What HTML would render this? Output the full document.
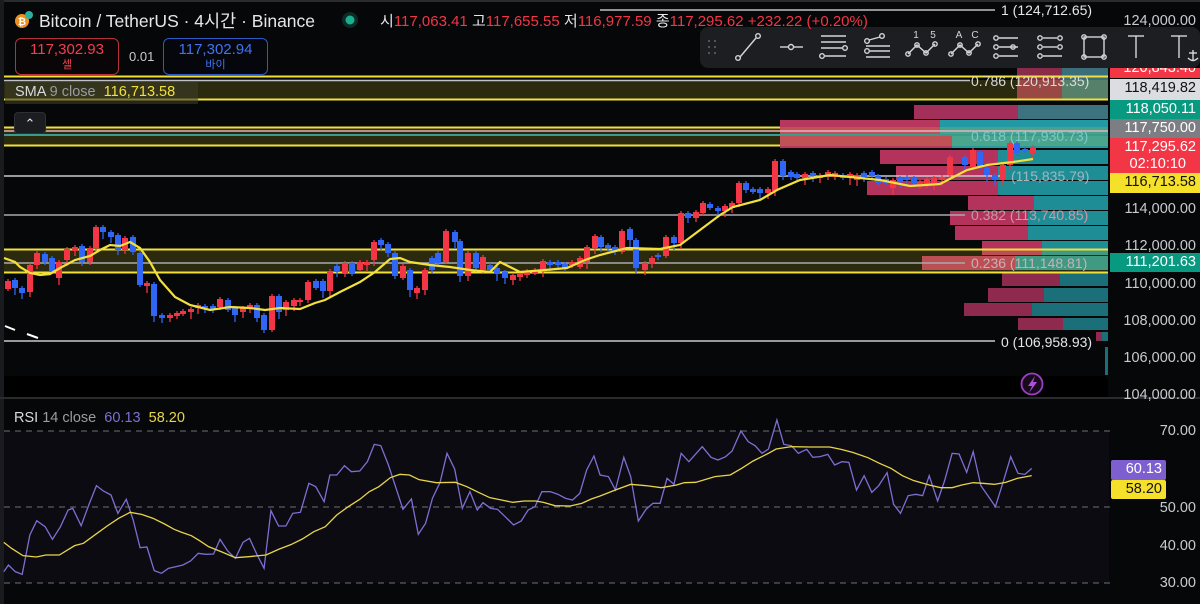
<!DOCTYPE html>
<html><head><meta charset="utf-8">
<style>
*{margin:0;padding:0;box-sizing:border-box}
body{width:1200px;height:604px;background:#060709;overflow:hidden;position:relative;font-family:"Liberation Sans","Noto Sans CJK KR",sans-serif;color:#d1d4dc}
.a{position:absolute;white-space:nowrap}
.ax{position:absolute;right:4px;font-size:14.5px;color:#c9cbd0;text-align:right;line-height:18px}
.bx{position:absolute;left:1110px;width:90px;font-size:14.5px;text-align:right;padding-right:4px;line-height:19px}
.fib{position:absolute;font-size:14px;color:#b8bac0;line-height:16px}
</style></head><body>
<svg width="1200" height="604" style="position:absolute;left:0;top:0">
<rect x="0" y="0" width="1200" height="604" fill="#060709"/>
<rect x="0" y="376" width="1108" height="22" fill="#000"/>
<rect x="0" y="0" width="1200" height="2" fill="#2a2b2f"/>
<rect x="0" y="0" width="4" height="604" fill="#1a1b1e"/>
<g>
<rect x="1017" y="68" width="45" height="32" fill="#8a2b4a"/><rect x="1062" y="68" width="46" height="32" fill="#3a6e78"/>
<rect x="914" y="105" width="104" height="14" fill="#a3305a"/><rect x="1018" y="105" width="90" height="14" fill="#3d737e"/>
<rect x="780" y="120" width="160" height="14" fill="#b8375f"/><rect x="940" y="120" width="168" height="14" fill="#239aa3"/>
<rect x="780" y="136" width="172" height="12" fill="#b8375f"/><rect x="952" y="136" width="156" height="12" fill="#2a9aa0"/>
<rect x="880" y="150" width="118" height="14" fill="#b3335c"/><rect x="998" y="150" width="110" height="14" fill="#1f8d95"/>
<rect x="896" y="166" width="102" height="14" fill="#b3335c"/><rect x="998" y="166" width="110" height="14" fill="#1f8d95"/>
<rect x="867" y="181" width="131" height="14" fill="#b3335c"/><rect x="998" y="181" width="110" height="14" fill="#1f8d95"/>
<rect x="968" y="196" width="66" height="14" fill="#b3335c"/><rect x="1034" y="196" width="74" height="14" fill="#1f8d95"/>
<rect x="950" y="211" width="78" height="14" fill="#b3335c"/><rect x="1028" y="211" width="80" height="14" fill="#1f8d95"/>
<rect x="955" y="226" width="73" height="14" fill="#b3335c"/><rect x="1028" y="226" width="80" height="14" fill="#1f8d95"/>
<rect x="982" y="241" width="60" height="14" fill="#b3335c"/><rect x="1042" y="241" width="66" height="14" fill="#1f8d95"/>
<rect x="922" y="256" width="93" height="14" fill="#b3335c"/><rect x="1015" y="256" width="93" height="14" fill="#1f8d95"/>
<rect x="1002" y="272" width="58" height="14" fill="#8e2a4d"/><rect x="1060" y="272" width="48" height="14" fill="#1b6f78"/>
<rect x="988" y="288" width="56" height="14" fill="#8e2a4d"/><rect x="1044" y="288" width="64" height="14" fill="#1b6f78"/>
<rect x="964" y="303" width="68" height="13" fill="#8e2a4d"/><rect x="1032" y="303" width="76" height="13" fill="#1b6f78"/>
<rect x="1018" y="318" width="45" height="12" fill="#8e2a4d"/><rect x="1063" y="318" width="45" height="12" fill="#1b6f78"/>
<rect x="1096" y="332" width="6" height="9" fill="#8e2a4d"/><rect x="1102" y="332" width="6" height="9" fill="#1b6f78"/>
<rect x="1105" y="347" width="3" height="28" fill="#1b6f78"/>
</g>
<rect x="4" y="80" width="1104" height="20" fill="rgba(230,220,40,0.17)"/>
<rect x="4" y="127" width="1104" height="19" fill="rgba(230,220,40,0.17)"/>
<rect x="4" y="249" width="1104" height="23" fill="rgba(230,220,40,0.17)"/>
<g stroke-width="2" fill="none">
<line x1="4" y1="76.5" x2="1108" y2="76.5" stroke="#f0e03a"/>
<line x1="4" y1="99.5" x2="1108" y2="99.5" stroke="#f0e03a"/>
<line x1="4" y1="127.5" x2="780" y2="127.5" stroke="#f0e03a"/>
<line x1="4" y1="145.5" x2="780" y2="145.5" stroke="#f0e03a"/>
<line x1="4" y1="249.5" x2="1108" y2="249.5" stroke="#f0e03a"/>
<line x1="4" y1="272.5" x2="1108" y2="272.5" stroke="#f0e03a"/>
</g>
<g stroke-width="1.5">
<line x1="600" y1="10" x2="995" y2="10" stroke="#bfc1c6"/>
<line x1="4" y1="80.5" x2="970" y2="80.5" stroke="#bfc1c6"/>
<line x1="4" y1="131" x2="1108" y2="131" stroke="#e8b0c0"/>
<line x1="4" y1="135" x2="1108" y2="135" stroke="#40c0b8"/>
<line x1="4" y1="176" x2="1000" y2="176" stroke="#c8cacf"/>
<line x1="4" y1="215" x2="965" y2="215" stroke="#a8aab0"/>
<line x1="4" y1="263" x2="965" y2="263" stroke="#a8aab0"/>
<line x1="4" y1="341" x2="995" y2="341" stroke="#c8cacf"/>
</g>
<line x1="5" y1="326" x2="15" y2="330" stroke="#fff" stroke-width="2"/>
<line x1="27" y1="334" x2="38" y2="338" stroke="#fff" stroke-width="2"/>
<g id="candles"></g>
<polyline fill="none" stroke="#f2e03c" stroke-width="2.2" points="4,258 15,262 20,267 30,273 40,275 50,274 60,268 75,260 90,256 100,250 110,245 120,246 130,242 140,248 150,262 160,280 175,297 190,305 210,310 230,307 250,308 265,310 280,308 300,309 315,303 325,300 340,292 360,282 375,272 390,259 400,258 410,262 430,265 450,267 470,270 490,272 500,262 520,272 545,270 567,268 585,260 600,255 627,248 660,249 680,245 700,230 720,215 733,207 760,200 777,190 800,180 830,175 860,178 880,180 910,186 940,184 967,170 987,165 1013,162 1033,159"/>
<rect x="0" y="397" width="1200" height="2" fill="#2a2b2f"/>
<rect x="4" y="431" width="1105" height="152" fill="#0c0b12"/>
<g stroke="#6e6f76" stroke-width="1" stroke-dasharray="6,5">
<line x1="4" y1="431" x2="1110" y2="431"/><line x1="4" y1="507" x2="1110" y2="507"/><line x1="4" y1="583" x2="1110" y2="583"/>
</g>
<g transform="translate(0,395) scale(0.38270,0.33333)" fill="none">
<polyline vector-effect="non-scaling-stroke" stroke="#7d6fd2" stroke-width="1.3" points="10,530 22,510 40,530 58,538 78,420 96,377 118,395 137,433 158,395 178,345 190,340 212,392 232,330 252,272 270,288 290,300 308,355 330,313 348,375 366,458 384,456 403,527 422,535 440,520 460,515 478,510 498,498 518,475 538,478 558,477 575,433 595,468 615,490 635,442 652,430 672,480 690,520 708,347 728,393 747,393 765,355 785,352 807,265 825,275 847,320 862,240 880,240 900,212 918,230 940,228 960,200 978,148 995,152 1015,210 1035,280 1053,343 1075,312 1093,418 1112,385 1130,310 1150,262 1168,175 1188,222 1208,340 1228,290 1247,345 1262,323 1282,340 1300,343 1320,365 1342,390 1362,378 1380,345 1398,335 1416,290 1438,290 1458,298 1478,310 1496,315 1515,295 1533,225 1552,183 1568,240 1590,245 1608,285 1630,187 1648,245 1668,378 1688,343 1706,325 1725,325 1743,250 1761,268 1780,175 1800,200 1835,155 1858,187 1876,195 1896,185 1913,168 1936,108 1955,140 1973,152 1991,175 2008,162 2030,75 2048,148 2068,152 2086,175 2108,163 2124,187 2143,185 2163,178 2181,210 2200,200 2218,202 2238,285 2258,242 2278,292 2296,272 2318,233 2335,328 2353,355 2373,302 2393,298 2411,302 2428,242 2450,318 2468,258 2488,175 2506,177 2526,232 2543,170 2563,272 2583,305 2601,335 2621,262 2641,185 2660,235 2678,238 2696,220"/>
<polyline vector-effect="non-scaling-stroke" stroke="#e8d44a" stroke-width="1.3" points="10,442 30,460 60,482 95,486 120,480 155,480 195,452 218,445 250,418 280,393 310,370 340,352 370,358 400,370 430,387 455,403 475,412 500,422 520,436 545,455 580,471 615,488 650,485 695,480 730,462 760,449 790,432 820,410 850,395 880,360 910,335 940,313 965,290 990,275 1020,248 1045,238 1070,240 1095,254 1140,263 1190,262 1220,275 1250,292 1280,308 1310,315 1340,322 1370,318 1400,318 1420,322 1450,332 1490,333 1520,325 1545,312 1568,303 1608,285 1648,268 1688,272 1728,278 1768,270 1788,263 1818,262 1868,245 1908,240 1938,220 1968,198 2008,175 2028,162 2068,155 2118,156 2168,156 2198,163 2228,172 2268,188 2298,205 2328,220 2358,242 2388,257 2428,270 2458,278 2488,278 2513,270 2543,263 2568,265 2598,268 2628,262 2658,250 2696,242"/>
</g>
<circle cx="1032" cy="384" r="10.5" fill="#160a1c" stroke="#9b3fc4" stroke-width="1.8"/>
<path d="M1035 376 L1028 386 L1032 386 L1029 393 L1037 382 L1033 382 Z" fill="#b04fd8"/>
<circle cx="22" cy="21" r="7" fill="#f0901a"/>
<text x="22" y="25" font-size="10" font-weight="bold" fill="#fff" text-anchor="middle" font-family="Liberation Sans">₿</text>
<circle cx="29" cy="15" r="4" fill="#2ab0a0"/>
<circle cx="350" cy="20" r="8" fill="#0d2a26"/><circle cx="350" cy="20" r="4.5" fill="#18b08e"/>
</svg>

<div class="a" style="left:700px;top:27px;width:500px;height:41px;background:#1d1e21;border-radius:8px"></div>
<svg width="500" height="41" style="position:absolute;left:700px;top:27px" fill="none" stroke="#d4d6da" stroke-width="1.4">
<g fill="#666" stroke="none"><circle cx="9" cy="14" r="1"/><circle cx="15" cy="14" r="1"/><circle cx="9" cy="20" r="1"/><circle cx="15" cy="20" r="1"/><circle cx="9" cy="26" r="1"/><circle cx="15" cy="26" r="1"/></g>
<line x1="40" y1="30" x2="56" y2="11"/><circle cx="38" cy="31" r="2.3"/><circle cx="58" cy="9" r="2.3"/>
<line x1="80" y1="20" x2="88" y2="20"/><circle cx="91" cy="20" r="2.5"/><line x1="94" y1="20" x2="103" y2="20"/>
<line x1="121" y1="9" x2="146" y2="9"/><line x1="121" y1="15" x2="146" y2="15"/><line x1="121" y1="21" x2="142" y2="21"/><circle cx="145" cy="21" r="2.3"/><line x1="125" y1="29" x2="146" y2="29"/><circle cx="122" cy="29" r="2.3"/>
<circle cx="167" cy="14" r="2.3"/><circle cx="182" cy="9" r="2.3"/><line x1="169" y1="13" x2="180" y2="10"/><circle cx="167" cy="24" r="2.3"/><line x1="166" y1="19" x2="190" y2="19"/><line x1="170" y1="24" x2="190" y2="24"/><line x1="166" y1="30" x2="190" y2="30"/>
<polyline points="208,27 217,18 226,26 235,17"/><circle cx="208" cy="27" r="2.2"/><circle cx="217" cy="18" r="2.2"/><circle cx="226" cy="26" r="2.2"/><circle cx="235" cy="17" r="2.2"/>
<polyline points="251,27 260,18 269,26 278,17"/><circle cx="251" cy="27" r="2.2"/><circle cx="260" cy="18" r="2.2"/><circle cx="269" cy="26" r="2.2"/><circle cx="278" cy="17" r="2.2"/>
<g fill="#d4d6da" stroke="none" font-size="10" font-family="Liberation Sans" text-anchor="middle"><text x="216" y="11">1</text><text x="233" y="11">5</text><text x="259" y="11">A</text><text x="275" y="11">C</text></g>
<circle cx="296" cy="11" r="2.2"/><line x1="299" y1="11" x2="318" y2="11"/><circle cx="296" cy="20" r="2.2"/><line x1="299" y1="20" x2="318" y2="20"/><circle cx="296" cy="29" r="2.2"/><line x1="299" y1="29" x2="318" y2="29"/>
<circle cx="313" cy="20" r="2.2"/><circle cx="340" cy="11" r="2.2"/><line x1="343" y1="11" x2="357" y2="11"/><circle cx="360" cy="11" r="2.2"/><circle cx="340" cy="20" r="2.2"/><line x1="343" y1="20" x2="357" y2="20"/><circle cx="360" cy="20" r="2.2"/><circle cx="340" cy="29" r="2.2"/><line x1="343" y1="29" x2="362" y2="29"/>
<rect x="384" y="10" width="20" height="20"/><circle cx="384" cy="10" r="2.2"/><circle cx="404" cy="10" r="2.2"/><circle cx="384" cy="30" r="2.2"/><circle cx="404" cy="30" r="2.2"/>
<line x1="428" y1="9" x2="444" y2="9"/><line x1="436" y1="9" x2="436" y2="31"/>
<line x1="471" y1="9" x2="487" y2="9"/><line x1="479" y1="9" x2="479" y2="31"/><line x1="493" y1="23" x2="493" y2="34"/><line x1="489" y1="26" x2="497" y2="26"/><path d="M488 31 Q493 36 498 31"/>
</svg>

<div class="a" style="left:39px;top:8px;font-size:17.5px;color:#e4e6ea">Bitcoin / TetherUS · 4시간 · Binance</div>
<div class="a" style="left:380px;top:10px;font-size:15px;color:#e4e6ea">시<span style="color:#f23645">117,063.41</span> 고<span style="color:#f23645">117,655.55</span> 저<span style="color:#f23645">116,977.59</span> 종<span style="color:#f23645">117,295.62 +232.22 (+0.20%)</span></div>
<div class="a" style="left:15px;top:38px;width:104px;height:37px;border:1.5px solid #b8303c;border-radius:6px;text-align:center;color:#f0404e;background:#0a0608">
<div style="font-size:15px;line-height:19px;margin-top:1px">117,302.93</div><div style="font-size:11px;line-height:13px">셀</div></div>
<div class="a" style="left:129px;top:49px;font-size:13px;color:#c8cacf">0.01</div>
<div class="a" style="left:163px;top:38px;width:105px;height:37px;border:1.5px solid #2d58c8;border-radius:6px;text-align:center;color:#3f74f0;background:#05070d">
<div style="font-size:15px;line-height:19px;margin-top:1px">117,302.94</div><div style="font-size:11px;line-height:13px">바이</div></div>
<div class="a" style="left:5px;top:82px;width:193px;height:22px;background:rgba(60,60,40,0.6)"></div>
<div class="a" style="left:15px;top:84px;font-size:14.5px;color:#d8dade">SMA <span style="color:#9a9ca2">9 close</span>&nbsp; <span style="color:#f2e03c">116,713.58</span></div>
<div class="a" style="left:14px;top:112px;width:32px;height:22px;background:#1c1d20;border:1px solid #2e2f33;border-radius:4px;color:#e4e6ea;font-size:13px;text-align:center;line-height:22px">⌃</div>

<div class="fib" style="left:1001px;top:2px;color:#e4e6ea">1 (124,712.65)</div>
<div class="fib" style="left:971px;top:73px;color:#d8dade">0.786 (120,913.35)</div>
<div class="fib" style="left:971px;top:128px;color:#7ec8c8">0.618 (117,930.73)</div>
<div class="fib" style="left:1011px;top:168px;color:#9fb8c0">(115,835.79)</div>
<div class="fib" style="left:971px;top:207px;color:#c89aaa">0.382 (113,740.85)</div>
<div class="fib" style="left:971px;top:255px;color:#c8b0b8">0.236 (111,148.81)</div>
<div class="fib" style="left:1001px;top:334px;color:#e4e6ea">0 (106,958.93)</div>

<div class="ax" style="top:12px">124,000.00</div>
<div class="bx" style="top:68px;height:10px;background:#f23645;color:#fff;line-height:14px;overflow:hidden"><span style="position:relative;top:-7px">120,843.40</span></div>
<div class="bx" style="top:79px;height:21px;background:#dcdde0;color:#111">118,419.82</div>
<div class="bx" style="top:100px;height:19px;background:#089981;color:#fff">118,050.11</div>
<div class="bx" style="top:119px;height:19px;background:#7d7e84;color:#fff">117,750.00</div>
<div class="bx" style="top:138px;height:35px;background:#f23645;color:#fff;line-height:17px;padding-top:1px">117,295.62<br><span style="padding-right:10px">02:10:10</span></div>
<div class="bx" style="top:173px;height:20px;background:#f5e02a;color:#111">116,713.58</div>
<div class="ax" style="top:200px">114,000.00</div>
<div class="ax" style="top:237px">112,000.00</div>
<div class="bx" style="top:253px;height:19px;background:#089981;color:#fff">111,201.63</div>
<div class="ax" style="top:275px">110,000.00</div>
<div class="ax" style="top:312px">108,000.00</div>
<div class="ax" style="top:349px">106,000.00</div>
<div class="ax" style="top:386px">104,000.00</div>

<div class="a" style="left:14px;top:410px;font-size:14.5px;color:#d8dade">RSI <span style="color:#9a9ca2">14 close</span>&nbsp; <span style="color:#7d6fd2">60.13</span>&nbsp; <span style="color:#e8d44a">58.20</span></div>
<div class="ax" style="top:422px">70.00</div>
<div class="bx" style="top:460px;left:1111px;width:55px;height:20px;background:#7d5fd0;color:#fff;border-radius:2px">60.13</div>
<div class="bx" style="top:480px;left:1111px;width:55px;height:19px;background:#f5e02a;color:#111;border-radius:2px">58.20</div>
<div class="ax" style="top:499px">50.00</div>
<div class="ax" style="top:537px">40.00</div>
<div class="ax" style="top:574px">30.00</div>

<script>
var C=[['r',8,281,289],['b',15,280,288],['b',22,288,293],['r',30,265,292],['r',37,253,265],['b',45,254,262],['b',52,258,272],['r',59,262,278],['r',67,249,260],['r',75,247,251],['b',82,246,262],['r',90,248,262],['r',96,227,248],['b',103,227,232],['b',111,232,237],['b',118,235,250],['r',125,238,250],['b',133,237,252],['b',140,253,285],['r',147,283,286],['b',154,284,316],['b',162,315,318],['r',170,315,318],['r',177,313,316],['r',183,311,314],['r',191,309,312],['r',198,305,308],['b',205,306,308],['b',213,306,309],['r',220,299,307],['b',228,300,310],['b',235,308,315],['r',243,308,312],['r',250,305,308],['b',257,305,318],['b',264,315,330],['r',272,296,330],['b',279,296,312],['r',286,302,310],['r',294,300,306],['r',300,300,302],['r',308,282,300],['b',316,281,288],['b',323,281,291],['r',330,271,291],['b',337,266,272],['r',345,263,273],['b',352,263,273],['r',360,262,270],['r',367,262,265],['r',374,242,260],['b',381,240,245],['b',388,244,253],['b',395,253,276],['r',403,266,278],['b',410,270,290],['r',417,288,293],['r',425,270,290],['b',432,258,270],['b',438,253,263],['r',446,231,262],['b',455,232,242],['b',460,241,276],['r',468,253,276],['b',476,253,268],['r',483,257,270],['b',490,265,270],['b',497,268,274],['b',505,272,278],['r',513,275,280],['r',520,273,277],['r',527,271,275],['r',535,270,273],['r',543,261,270],['b',550,262,265],['b',558,262,265],['b',565,264,268],['r',572,262,265],['r',580,258,267],['r',587,247,262],['r',595,236,248],['b',601,237,247],['b',608,245,248],['b',615,247,252],['r',622,231,252],['b',630,229,240],['b',636,240,268],['r',645,263,270],['r',652,258,264],['b',658,255,257],['r',666,237,256],['b',674,237,243],['r',681,213,243],['b',688,213,218],['r',696,212,218],['r',703,203,213],['b',710,204,208],['b',718,208,211],['r',725,206,211],['r',732,203,208],['r',739,183,203],['b',746,183,190],['b',753,189,192],['b',760,189,193],['r',768,189,193],['r',775,161,191],['b',783,161,176],['b',791,172,177],['b',797,174,178],['r',805,174,178],['b',813,173,176],['r',820,175,178],['r',828,172,176],['r',835,173,177],['b',843,175,178],['r',850,174,178],['r',857,175,180],['b',864,173,177],['b',872,172,176],['b',878,176,183],['b',886,179,183],['r',893,180,188],['b',900,178,182],['b',907,177,180],['b',914,178,183],['r',920,182,186],['r',927,179,186],['r',934,178,183],['r',942,177,180],['r',950,157,175],['b',965,157,165],['r',973,150,167],['b',980,152,167],['b',987,168,175],['b',995,175,180],['r',1003,165,180],['r',1010,143,165],['b',1017,143,153],['b',1025,149,151],['r',1033,147,153]];
var s='';
for(var i=0;i<C.length;i++){var c=C[i],col=c[0]=='r'?'#f23645':'#2f66f5';var t=c[2]-2-((i*7)%7),b=c[3]+2+((i*5)%6);var h=Math.max(2,c[3]-c[2]);
s+='<line x1="'+c[1]+'" y1="'+t+'" x2="'+c[1]+'" y2="'+b+'" stroke="'+col+'" stroke-width="1.3"/><rect x="'+(c[1]-3)+'" y="'+c[2]+'" width="6" height="'+h+'" fill="'+col+'"/>';}
document.getElementById('candles').innerHTML=s;
</script>
</body></html>
